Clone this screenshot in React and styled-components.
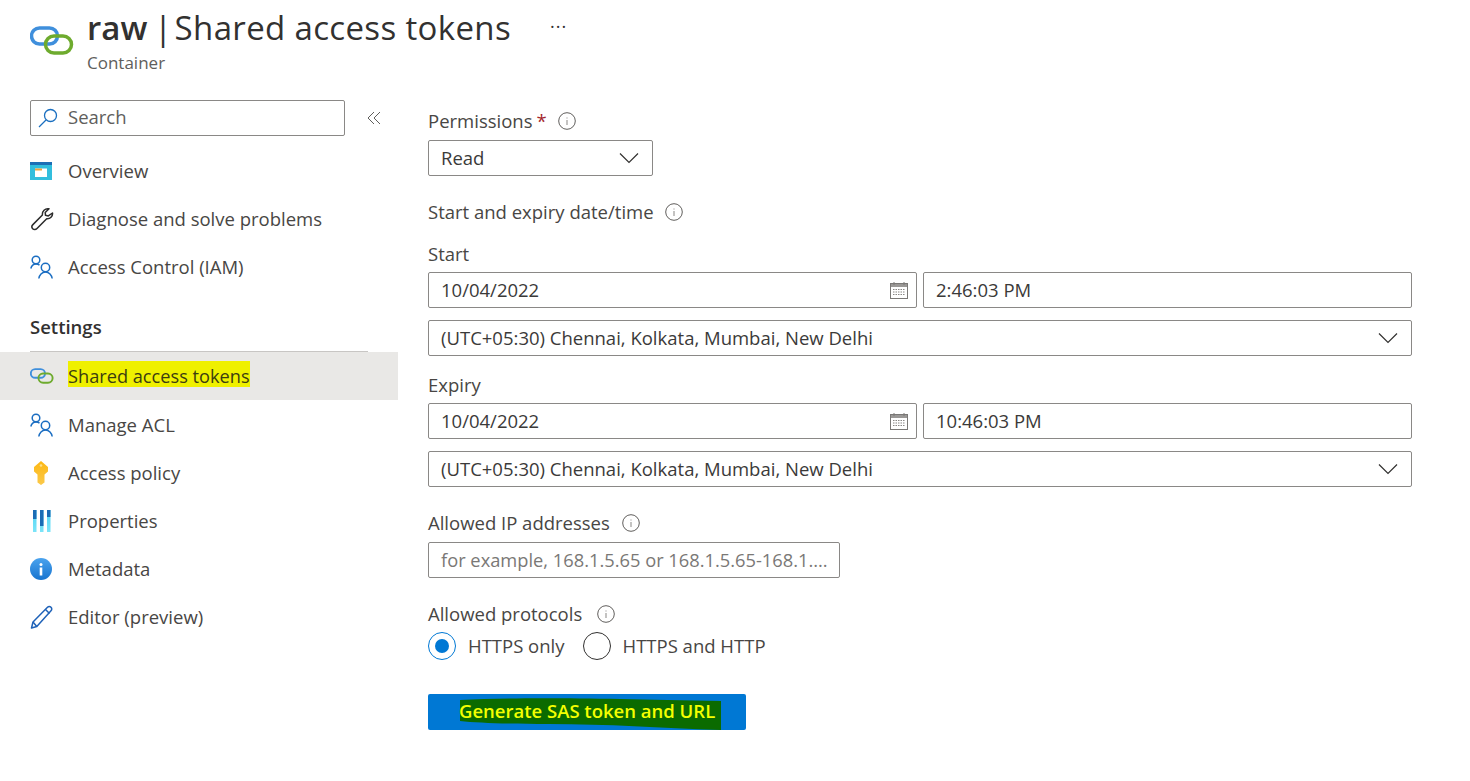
import React from "react";
import styled, { createGlobalStyle } from "styled-components";

const GlobalStyle = createGlobalStyle`
  html, body {
    margin: 0;
    padding: 0;
    background: #fff;
    font-family: "Open Sans", "Liberation Sans", sans-serif;
    color: #3b3a39;
  }
`;

const Page = styled.div`
  width: 1470px;
  height: 781px;
  overflow: hidden;
  background: #fff;
`;

const Header = styled.header`
  display: flex;
  align-items: flex-start;
  height: 100px;
  padding: 7px 0 0 30px;
  box-sizing: border-box;
`;

const HeaderIcon = styled.svg`
  width: 44px;
  height: 30px;
  margin-top: 19px;
  margin-right: 13px;
  flex: none;
`;

const TitleBlock = styled.div`
  display: flex;
  flex-direction: column;
`;

const TitleRow = styled.div`
  display: flex;
  align-items: center;
  height: 42px;
`;

const Title = styled.h1`
  margin: 0;
  font-size: 33px;
  font-weight: 400;
  line-height: 42px;
  color: #323130;
  white-space: nowrap;
  b {
    font-weight: 600;
  }
`;

const TitleBar = styled.span`
  margin: 0 -6px 0 -2px;
`;

const TitleRest = styled.span`
  letter-spacing: 0.35px;
`;

const More = styled.span`
  margin-left: 39px;
  margin-top: -4px;
  font-size: 18px;
  letter-spacing: 1px;
  color: #323130;
  line-height: 1;
`;

const Subtitle = styled.div`
  margin-top: 2px;
  font-size: 17px;
  line-height: 24px;
  color: #605e5c;
`;

const Body = styled.div`
  display: flex;
`;

const Sidebar = styled.aside`
  width: 398px;
  flex: none;
  margin-right: 30px;
`;

const SearchRow = styled.div`
  display: flex;
  align-items: center;
  padding-left: 30px;
  height: 36px;
  margin-bottom: 11px;
`;

const SearchBox = styled.div`
  width: 315px;
  height: 36px;
  box-sizing: border-box;
  border: 1px solid #8a8886;
  border-radius: 2px;
  display: flex;
  align-items: center;
  padding: 0 0 4px 7px;
  gap: 10px;
  font-size: 18.5px;
  color: #605e5c;
  svg {
    margin-top: 4px;
  }
`;

const Collapse = styled.svg`
  width: 14px;
  height: 14px;
  margin-left: 22px;
`;

const NavRow = styled.div`
  display: flex;
  align-items: center;
  box-sizing: border-box;
  height: 48px;
  padding: 0 0 2px 30px;
  font-size: 18.5px;
  color: #484644;
  background: ${({ $active }) => ($active ? "#e9e8e6" : "transparent")};
`;

const LowerNav = styled.nav`
  padding-top: 1px;
`;

const NavIcon = styled.span`
  width: 38px;
  flex: none;
  display: flex;
  align-items: center;
  margin-top: 2px;
  svg {
    display: block;
  }
`;

const Marked = styled.span`
  background: #eff000;
  height: 26px;
  margin-top: -2px;
  font-size: 18.2px;
  line-height: 30px;
  color: #3c3c10;
`;

const SectionTitle = styled.div`
  margin: 24px 0 0 30px;
  width: 338px;
  height: 37px;
  box-sizing: border-box;
  border-bottom: 1px solid #c8c6c4;
  font-size: 18.5px;
  font-weight: 600;
  line-height: 24px;
  color: #323130;
`;

const Form = styled.main`
  width: 984px;
  flex: none;
`;

const Label = styled.div`
  display: flex;
  align-items: center;
  box-sizing: border-box;
  height: 24px;
  padding-bottom: 2px;
  margin-top: ${({ $top }) => $top || 0}px;
  margin-bottom: ${({ $bottom }) => $bottom ?? 7}px;
  font-size: 18.5px;
  color: #484644;
`;

const Required = styled.span`
  color: #a4262c;
  margin-left: 4px;
`;

const InfoIcon = styled.svg`
  width: 18px;
  height: 18px;
  margin-top: 2px;
  margin-left: ${({ $gap }) => $gap || 12}px;
`;

const Field = styled.div`
  display: flex;
  align-items: center;
  justify-content: space-between;
  box-sizing: border-box;
  height: 36px;
  width: ${({ $width }) => ($width ? `${$width}px` : "100%")};
  flex: ${({ $grow }) => ($grow ? "1 1 0" : "none")};
  border: 1px solid #8a8886;
  border-radius: 2px;
  padding: 0 12px 2px;
  font-size: ${({ $muted }) => ($muted ? "18.3px" : "18.5px")};
  color: ${({ $muted }) => ($muted ? "#7a7876" : "#3b3a39")};
  white-space: nowrap;
  overflow: hidden;
`;

const FieldRow = styled.div`
  display: flex;
  gap: 6px;
  margin-bottom: 12px;
`;

const Chevron = styled.svg`
  width: 20px;
  height: 12px;
  flex: none;
  margin: 2px 1px 0 0;
`;

const CalendarIcon = styled.svg`
  width: 18px;
  height: 18px;
  flex: none;
  margin: 2px -4px 0 0;
`;

const Radios = styled.div`
  display: flex;
  align-items: center;
  height: 28px;
`;

const Radio = styled.span`
  width: 28px;
  height: 28px;
  box-sizing: border-box;
  border-radius: 50%;
  border: 1px solid ${({ $on }) => ($on ? "#0078d4" : "#323130")};
  display: flex;
  align-items: center;
  justify-content: center;
  margin-right: 12px;
  &::after {
    content: "";
    width: 14px;
    height: 14px;
    border-radius: 50%;
    background: ${({ $on }) => ($on ? "#0078d4" : "transparent")};
  }
`;

const RadioText = styled.span`
  font-size: 18.5px;
  color: #484644;
  margin: -2px 18px 0 0;
`;

const Button = styled.button`
  position: relative;
  display: block;
  width: 318px;
  height: 36px;
  margin-top: 34px;
  padding: 0 0 4px 31px;
  border: 0;
  border-radius: 2px;
  background: #0078d4;
  text-align: left;
  font-family: inherit;
  font-size: 18.5px;
  font-weight: 600;
  color: #f4ff00;
  overflow: hidden;
`;

const Scribble = styled.svg`
  position: absolute;
  left: 31px;
  top: 3px;
  width: 264px;
  height: 33px;
`;

const ButtonText = styled.span`
  position: relative;
`;

const LinkIcon = ({ size }) => (
  <svg width={size} height={(size * 30) / 44} viewBox="0 0 44 30">
    <rect x="1.5" y="2" width="26" height="16" rx="8" fill="none" stroke="#3f8fdc" strokeWidth="3.5" />
    <rect x="15.5" y="10" width="26" height="17" rx="8.5" fill="none" stroke="#6eab2e" strokeWidth="3.5" />
  </svg>
);

const People = () => (
  <svg width="24" height="24" viewBox="0 0 24 24" fill="none" stroke="#1b6ec2" strokeWidth="1.5">
    <circle cx="6" cy="5" r="3.8" />
    <path d="M.8 13.500c.8-2.800 2.800-4.500 5.200-4.500 1.400 0 2.500.4 3.500 1.200" />
    <circle cx="15.500" cy="12.500" r="4.200" />
    <path d="M8.800 23.500c.4-3.500 3.200-6.500 6.700-6.500s6.300 3 6.700 6.500" />
  </svg>
);

const navTop = [
  {
    label: "Overview",
    icon: (
      <svg width="22" height="18" viewBox="0 0 22 18">
        <rect width="22" height="18" fill="#32bedd" />
        <rect width="22" height="3" fill="#1c6fb5" />
        <rect x="5" y="6.5" width="12" height="8.5" fill="#fff" />
        <rect x="5" y="6.5" width="7" height="2" fill="#f2a33a" />
      </svg>
    ),
  },
  {
    label: "Diagnose and solve problems",
    icon: (
      <svg width="24" height="24" viewBox="0 0 24 24" fill="none" stroke="#2b2b2b" strokeWidth="1.5" strokeLinejoin="round">
        <path d="M22.500 6c.4 3.200-2.400 6.200-5.800 5.700L7 21.600c-1.300 1.300-3.200 1.300-4.300.1s-1-2.900.2-4.100l9.500-9.600C12 4.500 15 1 19 1.800l-3.800 3.700.3 2.800 2.800.6z" />
      </svg>
    ),
  },
  { label: "Access Control (IAM)", icon: <People /> },
];

const navBottom = [
  { label: "Manage ACL", icon: <People /> },
  {
    label: "Access policy",
    icon: (
      <svg width="24" height="24" viewBox="0 0 24 24">
        <defs>
          <linearGradient id="keyFill" x1="0" y1="0" x2="0" y2="1">
            <stop offset="0" stopColor="#fdb813" />
            <stop offset="1" stopColor="#fbc94a" />
          </linearGradient>
        </defs>
        <path d="M11 0l7 6v4.500L14.500 13.500V21.500L11 24 7.500 21.500V13.500L4 10.500V6z" fill="url(#keyFill)" />
        <circle cx="11" cy="4.500" r="1.300" fill="#fde08a" />
      </svg>
    ),
  },
  {
    label: "Properties",
    icon: (
      <svg width="24" height="24" viewBox="0 0 24 24">
        <defs>
          <linearGradient id="barFade" x1="0" y1="0" x2="0" y2="1">
            <stop offset="0" stopColor="#50d4f4" />
            <stop offset="1" stopColor="#7ce4f8" />
          </linearGradient>
        </defs>
        <rect x="3" y="1" width="3.500" height="22" fill="url(#barFade)" />
        <rect x="3" y="1" width="3.500" height="9" fill="#1b6cb5" />
        <rect x="10" y="1" width="3.500" height="22" fill="url(#barFade)" />
        <rect x="10" y="1" width="3.500" height="16" fill="#1b6cb5" />
        <rect x="17" y="1" width="3.500" height="22" fill="url(#barFade)" />
        <rect x="17" y="1" width="3.500" height="7" fill="#1b6cb5" />
      </svg>
    ),
  },
  {
    label: "Metadata",
    icon: (
      <svg width="22" height="22" viewBox="0 0 22 22">
        <defs>
          <linearGradient id="infoFill" x1="0" y1="0" x2="0" y2="1">
            <stop offset="0" stopColor="#4aa3ee" />
            <stop offset="1" stopColor="#1874cf" />
          </linearGradient>
        </defs>
        <circle cx="11" cy="11" r="11" fill="url(#infoFill)" />
        <circle cx="11" cy="6.500" r="1.500" fill="#fff" />
        <rect x="9.700" y="9.500" width="2.600" height="8" fill="#fff" />
      </svg>
    ),
  },
  {
    label: "Editor (preview)",
    icon: (
      <svg width="24" height="24" viewBox="0 0 24 24" fill="none" stroke="#1f62b8" strokeWidth="1.500" strokeLinejoin="round">
        <path d="M1.500 23l1.500-6L17.500 2.300c1-1 2.500-1 3.500 0s1 2.500 0 3.500L6.800 21.500z" />
        <path d="M3 17l3.800 4.500M15.500 4.500l4 4" />
      </svg>
    ),
  },
];

const Info = ({ gap }) => (
  <InfoIcon $gap={gap} viewBox="0 0 18 18" fill="none">
    <circle cx="9" cy="9" r="8.300" stroke="#605e5c" strokeWidth="1" />
    <rect x="8.500" y="8" width="1" height="5" fill="#8a8886" />
    <rect x="8.500" y="5.500" width="1" height="1" fill="#8a8886" />
  </InfoIcon>
);

const Caret = () => (
  <Chevron viewBox="0 0 20 12" fill="none">
    <path d="M1 1.500l9 9 9-9" stroke="#323130" strokeWidth="1.200" />
  </Chevron>
);

const Calendar = () => (
  <CalendarIcon viewBox="0 0 18 18" fill="none">
    <rect x="0.500" y="2.500" width="17" height="15" stroke="#7a7876" />
    <rect x="1" y="3" width="16" height="3" fill="#9a9896" />
    <path d="M4 1v3M14 1v3" stroke="#7a7876" />
    <path d="M3 8.500h12M3 11h12M3 13.500h12" stroke="#8a8886" strokeWidth="1.200" strokeDasharray="1.500 1" />
  </CalendarIcon>
);

const DateTimeGroup = ({ date, time }) => (
  <>
    <FieldRow>
      <Field $grow>
        {date}
        <Calendar />
      </Field>
      <Field $grow>{time}</Field>
    </FieldRow>
    <Field>
      (UTC+05:30) Chennai, Kolkata, Mumbai, New Delhi
      <Caret />
    </Field>
  </>
);

const NavItem = ({ icon, label, active }) => (
  <NavRow $active={active}>
    <NavIcon>{icon}</NavIcon>
    {active ? <Marked>{label}</Marked> : label}
  </NavRow>
);

export default function App() {
  return (
    <Page>
      <GlobalStyle />
      <Header>
        <HeaderIcon viewBox="0 0 44 30">
          <rect x="1.500" y="2" width="26" height="16" rx="8" fill="none" stroke="#3f8fdc" strokeWidth="3.500" />
          <rect x="15.500" y="10" width="26" height="17" rx="8.500" fill="none" stroke="#6eab2e" strokeWidth="3.500" />
        </HeaderIcon>
        <TitleBlock>
          <TitleRow>
            <Title>
              <b>raw</b> <TitleBar>|</TitleBar> <TitleRest>Shared access tokens</TitleRest>
            </Title>
            <More>···</More>
          </TitleRow>
          <Subtitle>Container</Subtitle>
        </TitleBlock>
      </Header>
      <Body>
        <Sidebar>
          <SearchRow>
            <SearchBox>
              <svg width="20" height="20" viewBox="0 0 20 20" fill="none" stroke="#1a6fc0" strokeWidth="1.300">
                <circle cx="12.500" cy="7.500" r="6" />
                <path d="M8 12L1 19" />
              </svg>
              Search
            </SearchBox>
            <Collapse viewBox="0 0 14 14" fill="none" stroke="#605e5c" strokeWidth="1">
              <path d="M7 1L1 7l6 6M13 1L7 7l6 6" />
            </Collapse>
          </SearchRow>
          {navTop.map((item) => (
            <NavItem key={item.label} {...item} />
          ))}
          <SectionTitle>Settings</SectionTitle>
          <NavItem active label="Shared access tokens" icon={<LinkIcon size={24} />} />
          <LowerNav>
            {navBottom.map((item) => (
              <NavItem key={item.label} {...item} />
            ))}
          </LowerNav>
        </Sidebar>
        <Form>
          <Label $bottom={7} $top={9}>
            Permissions<Required>*</Required>
            <Info gap={11} />
          </Label>
          <Field $width={225}>
            Read
            <Caret />
          </Field>
          <Label $top={24} $bottom={18}>
            Start and expiry date/time
            <Info gap={11} />
          </Label>
          <Label $bottom={6}>Start</Label>
          <DateTimeGroup date="10/04/2022" time="2:46:03 PM" />
          <Label $top={17} $bottom={6}>
            Expiry
          </Label>
          <DateTimeGroup date="10/04/2022" time="10:46:03 PM" />
          <Label $top={24} $bottom={7}>
            Allowed IP addresses
            <Info gap={12} />
          </Label>
          <Field $width={412} $muted>
            for example, 168.1.5.65 or 168.1.5.65-168.1....
          </Field>
          <Label $top={24} $bottom={6}>
            Allowed protocols
            <Info gap={15} />
          </Label>
          <Radios>
            <Radio $on />
            <RadioText>HTTPS only</RadioText>
            <Radio />
            <RadioText>HTTPS and HTTP</RadioText>
          </Radios>
          <Button>
            <Scribble viewBox="0 0 264 33" preserveAspectRatio="none">
              <path d="M1 3C60 0 130 1 262 4V33C200 31 150 27 90 27C50 27 20 26 1 24z" fill="#0b6b00" />
            </Scribble>
            <ButtonText>Generate SAS token and URL</ButtonText>
          </Button>
        </Form>
      </Body>
    </Page>
  );
}
